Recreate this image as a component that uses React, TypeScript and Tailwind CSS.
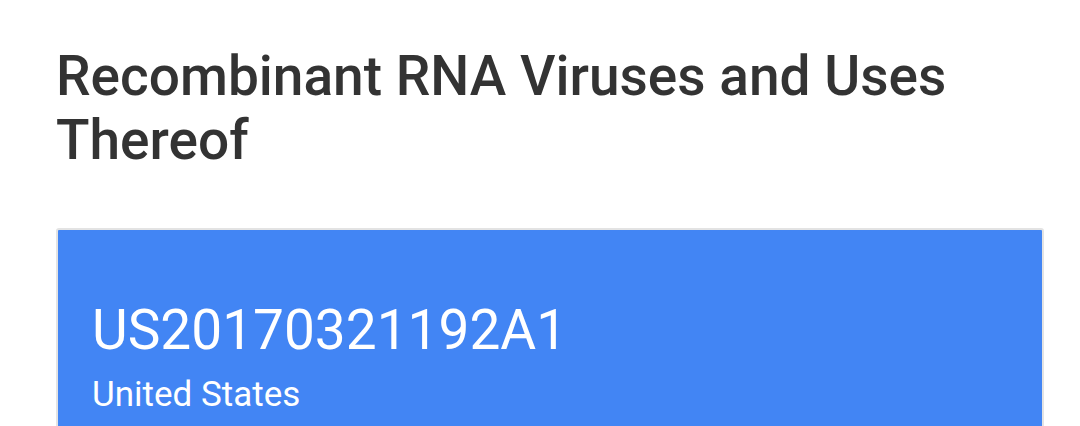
export default function App() {
  return (
    <div className="h-screen overflow-hidden bg-white px-[56px] pt-[44px] font-['Roboto',sans-serif]">
      <h1 className="max-w-[940px] text-[55px] font-medium leading-[64px] text-[#333333]">
        Recombinant RNA Viruses and Uses Thereof
      </h1>

      <div className="mt-[56px] w-[988px] rounded-[3px] border-2 border-[#e3e3e3] bg-[#4285f4] px-[34px] pt-[68px] pb-[40px] text-white">
        <div className="text-[55px] leading-[64px] font-normal">US20170321192A1</div>
        <div className="mt-[13px] text-[35px] leading-[40px]">United States</div>
      </div>
    </div>
  );
}
